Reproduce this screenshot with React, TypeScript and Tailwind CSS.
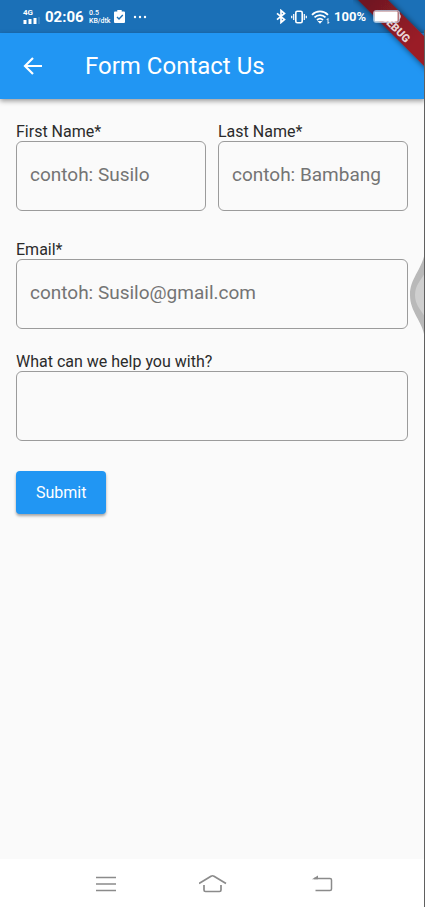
import type { InputHTMLAttributes } from "react";

type FieldProps = InputHTMLAttributes<HTMLInputElement> & { id: string; label: string };

function Field({ id, label, ...rest }: FieldProps) {
  return (
    <div className="flex min-w-0 flex-1 flex-col">
      <label htmlFor={id} className="text-[16px] leading-[19px] text-[#2b2b2b]">
        {label}
      </label>
      <input
        id={id}
        className="h-[70px] w-full rounded-md border border-[#9b9b9b] bg-transparent px-[13px] pb-[3px] text-[19px] text-[#222] outline-none placeholder:text-[#747474] focus:border-[#2196f3]"
        {...rest}
      />
    </div>
  );
}

function StatusBar() {
  return (
    <div className="flex h-[33px] items-center justify-between bg-[#1b70b7] pr-[24px] pl-[23px] text-white">
      <div className="flex items-center">
        <div className="flex w-[22px] flex-col">
          <span className="text-[8px] leading-[8px] font-bold">4G</span>
          <svg width="18" height="7" viewBox="0 0 18 7" fill="currentColor" aria-hidden="true">
            <rect x="0.5" y="3" width="3" height="4" />
            <rect x="5.5" y="2" width="3" height="5" />
            <rect x="10.5" y="1" width="3" height="6" />
            <rect x="15.5" y="0" width="1" height="7" opacity="0.3" />
          </svg>
        </div>
        <span className="w-[44px] text-[15px] leading-[20px] font-bold">02:06</span>
        <div className="flex w-[25px] flex-col text-[7px] leading-[8px] font-medium">
          <span>0.5</span>
          <span>KB/dtk</span>
        </div>
        <svg width="11" height="13" viewBox="0 0 11 13" aria-hidden="true">
          <path fill="currentColor" d="M1 1.5h2.3V0h4.4v1.5H10a1 1 0 0 1 1 1V12a1 1 0 0 1-1 1H1a1 1 0 0 1-1-1V2.500a1 1 0 0 1 1-1z" />
          <path d="M3 7l2 2 3.800-4" fill="none" stroke="#1b70b7" strokeWidth="1.400" />
        </svg>
        <svg className="ml-2" width="14" height="4" viewBox="0 0 14 4" fill="currentColor" aria-hidden="true">
          <circle cx="2" cy="2" r="1.200" />
          <circle cx="7" cy="2" r="1.200" />
          <circle cx="12" cy="2" r="1.200" />
        </svg>
      </div>
      <div className="flex items-center">
        <svg width="11" height="15" viewBox="0 0 11 15" fill="none" stroke="currentColor" strokeWidth="1.700" aria-hidden="true">
          <path d="M1 4.300L8.500 10.500 5 13.500V1.500L8.500 4.500 1 10.700" />
        </svg>
        <svg className="ml-1" width="16" height="14" viewBox="0 0 16 14" fill="none" stroke="currentColor" aria-hidden="true">
          <rect x="4.800" y="1.200" width="6.400" height="11.600" rx="1.500" strokeWidth="1.600" />
          <path d="M2.700 4v6M13.300 4v6M.7 5.800v2.400M15.300 5.800v2.400" strokeWidth="1.200" />
        </svg>
        <svg className="ml-1" width="19" height="14" viewBox="0 0 19 14" fill="none" stroke="currentColor" strokeWidth="1.800" aria-hidden="true">
          <path d="M1 4.800C5.500.3 12.500.3 17 4.800M3.500 7.400c3.200-3.100 7.800-3.100 11 0M6 10c1.800-1.700 4.200-1.700 6 0" />
          <path d="M6.500 11h5L9 13.800z" fill="currentColor" stroke="none" />
          <path d="M17 8.500v5M15.700 10L17 8.500M18.200 12L17 13.500" strokeWidth="0.900" />
        </svg>
        <span className="ml-1 w-[39px] text-[13px] leading-[16px] font-bold">100%</span>
        <svg className="relative z-20" width="28" height="14" viewBox="0 0 28 14" aria-hidden="true">
          <rect x="0.500" y="0.500" width="26" height="12" rx="2.500" fill="#ffffff66" stroke="#b5d1ea" strokeOpacity="0.700" />
          <rect x="1.500" y="1.500" width="23" height="10" rx="1" fill="white" />
          <path d="M26.500 4c1.500.5 1.500 4.500 0 5z" fill="white" />
        </svg>
      </div>
    </div>
  );
}

function DebugRibbon() {
  return (
    <svg className="pointer-events-none absolute top-0 right-0 z-10" width="72" height="76" viewBox="0 0 72 76">
      <defs>
        <filter id="ribbon-shadow" x="-20%" y="-20%" width="140%" height="140%">
          <feDropShadow dx="0" dy="0" stdDeviation="3" floodColor="#000" floodOpacity="0.6" />
        </filter>
        <linearGradient id="ribbon-red" x1="0" y1="0" x2="1" y2="1">
          <stop offset="0.2" stopColor="#711820" />
          <stop offset="0.7" stopColor="#9a1e28" />
        </linearGradient>
      </defs>
      <path d="M-5-10L80 75V45L25-10z" fill="url(#ribbon-red)" filter="url(#ribbon-shadow)" />
      <text x="43" y="32" transform="rotate(45 43 28)" textAnchor="middle" fill="#e9d5d7" fontSize="11" fontWeight="900">
        DEBUG
      </text>
    </svg>
  );
}

function NavigationBar() {
  const button = "flex h-[48px] w-[48px] items-center justify-center";
  return (
    <nav className="flex h-[48px] items-center justify-center gap-[60px] bg-white text-[#8b8b8b]">
      <button type="button" aria-label="Recent apps" className={button}>
        <svg width="22" height="18" viewBox="0 0 22 18" fill="none" stroke="currentColor" strokeWidth="1.500">
          <path d="M2 3.500h20M2 10h20M2 16.500h20" />
        </svg>
      </button>
      <button type="button" aria-label="Home" className={button}>
        <svg width="28" height="20" viewBox="0 0 28 20" fill="none" stroke="currentColor" strokeWidth="1.700">
          <path d="M0 10.500L12 3.200q1.500-.9 3 0L27 10.500M5 12v5q0 1.500 1.500 1.500h14q1.500 0 1.500-1.500v-5" />
        </svg>
      </button>
      <button type="button" aria-label="Back" className={button}>
        <svg width="24" height="18" viewBox="0 0 24 18" fill="none" stroke="currentColor" strokeWidth="1.500">
          <path d="M5 4.500h16q1.500 0 1.500 1.500v9q0 1.500-1.500 1.500H6.500" />
          <path d="M3 5.200L9 1.500v3.700z" fill="currentColor" stroke="none" />
        </svg>
      </button>
    </nav>
  );
}

export default function App() {
  return (
    <div className="relative flex min-h-screen flex-col overflow-hidden bg-[#fafafa] font-[Roboto,sans-serif]">
      <StatusBar />
      <DebugRibbon />
      <header className="flex h-[66px] items-center bg-[#2196f3] pl-[23px] text-white shadow-[0_2px_5px_rgba(0,0,0,0.4)]">
        <button type="button" aria-label="Back">
          <svg width="20" height="20" viewBox="0 0 20 20" fill="none" stroke="currentColor" strokeWidth="2.200">
            <path d="M19 10H2M10 2L2 10l8 8" />
          </svg>
        </button>
        <h1 className="ml-[42px] text-[24px] leading-[28px]">Form Contact Us</h1>
      </header>
      <main className="flex-1 pt-[23px] pr-[17px] pl-4">
        <form onSubmit={(event) => event.preventDefault()}>
          <div className="flex gap-3">
            <Field id="first-name" label="First Name*" placeholder="contoh: Susilo" />
            <Field id="last-name" label="Last Name*" placeholder="contoh: Bambang" />
          </div>
          <div className="mt-[29px] flex">
            <Field id="email" label="Email*" type="email" placeholder="contoh: Susilo@gmail.com" />
          </div>
          <div className="mt-[23px] flex">
            <Field id="message" label="What can we help you with?" />
          </div>
          <button
            type="submit"
            className="mt-[30px] h-[43px] rounded bg-[#2196f3] px-5 text-[16px] text-white shadow-[0_2px_3px_rgba(0,0,0,0.35)]"
          >
            Submit
          </button>
        </form>
      </main>
      <svg className="pointer-events-none absolute top-[252px] right-0" width="16" height="86" viewBox="0 0 16 86" aria-hidden="true">
        <path d="M16 0C13 18 1 26 1 43s12 25 15 43z" fill="#b9b9b9" />
        <path d="M16 21C12 28 6 33 6 43s6 15 10 22z" fill="#cfcfcf" />
      </svg>
      <NavigationBar />
      <div className="pointer-events-none absolute top-[30px] right-0 bottom-0 z-30 w-px bg-[#606060]" />
    </div>
  );
}
